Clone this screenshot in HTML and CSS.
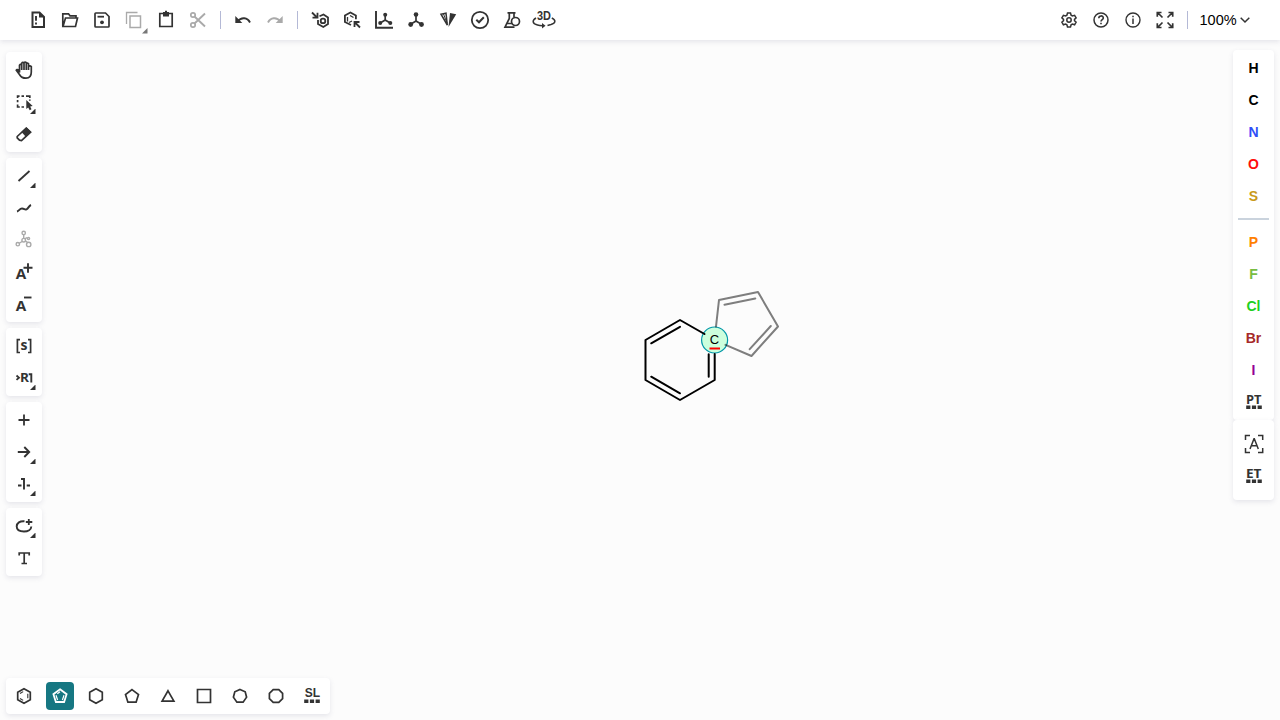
FILE: index.html
```
<!DOCTYPE html>
<html lang="en">
<head>
<meta charset="utf-8">
<title>Molecule editor</title>
<link rel="stylesheet" href="styles.css">
</head>
<body>
<div class="app">
<header class="topbar">
  <button class="btn"><svg viewBox="0 0 24 24"><path d="M6.500 4.500h7l4.500 4.500v10H6.500z" stroke-width="2"/><path d="M13 4v5.500h5.500z" class="solid"/><path d="M10 8v4.700M10 14.500v2" stroke-width="1.900"/></svg></button>
  <button class="btn"><svg viewBox="0 0 24 24"><path d="M4.800 18.500V5.800h5.700l1.500 2h6v2.200M5 18.500l2.500-8.500h12l-2 8.500z" stroke-width="1.700"/></svg></button>
  <button class="btn"><svg viewBox="0 0 24 24"><path d="M5.800 5h9.700l3.500 3.500v9.700q0 .8-.8.800H5.800q-.8 0-.8-.8V5.800q0-.8.8-.8z" stroke-width="1.700"/><path d="M7.500 8.700h6.500" stroke-width="1.800"/><circle cx="12" cy="14.300" r="1.900" class="solid"/></svg></button>
  <button class="btn dim"><svg viewBox="0 0 24 24"><path d="M4.500 16V4.500h11" stroke-width="1.300"/><path d="M8 8h10.500v11.500H8z" stroke-width="1.500"/></svg><i class="corner"></i></button>
  <button class="btn"><svg viewBox="0 0 24 24"><path d="M5.800 5.500h12.400v13H5.800z" stroke-width="1.700"/><path d="M9 4h6v4.500H9z" class="solid"/><path d="M11 3.500h2"/></svg></button>
  <button class="btn dim"><svg viewBox="0 0 24 24"><circle cx="7" cy="7" r="2.200"/><circle cx="7" cy="17" r="2.200"/><path d="M8.500 8.500L19 18.500M8.500 15.500L19 5.500" stroke-width="1.900"/></svg></button>
  <span class="rule"></span>
  <button class="btn"><svg viewBox="0 0 24 24"><path d="M6.500 13.500c4-5 10-4 12.500 1" stroke-width="1.900"/><path d="M4.300 8v7h7z" class="solid"/></svg></button>
  <button class="btn dim"><svg viewBox="0 0 24 24"><path d="M17.500 13.500c-4-5-10-4-12.500 1" stroke-width="1.900"/><path d="M19.700 8v7h-7z" class="solid"/></svg></button>
  <span class="rule"></span>
  <button class="btn"><svg viewBox="0 0 24 24"><path d="M4 4.500l5 5M9.500 4.700v5h-5" stroke-width="1.800"/><path d="M11.500 8.300l4-1.800 4.500 3v6.500l-4.700 3-5.300-3v-4" stroke-width="1.800"/><circle cx="15" cy="12.900" r="2.300" stroke-width="1.800"/></svg></button>
  <button class="btn"><svg viewBox="0 0 24 24"><path d="M11 17l-6.100-3V7.500l5.500-3 5.500 3v3.700" stroke-width="1.800"/><path d="M7.500 9v4.500M10 7.500l3.500 2M9 14.500l3-1.500" stroke-width="1.300"/><path d="M20 19.500l-5-5M14.500 19v-5h5" stroke-width="1.800"/></svg></button>
  <button class="btn"><svg viewBox="0 0 24 24"><path d="M4 3v16.800h17" stroke-width="1.900"/><path d="M13.200 7v5l-5 3M13.200 12l5 3" stroke-width="1.700"/><g class="solid"><circle cx="13.200" cy="6.800" r="2"/><circle cx="8.200" cy="15" r="2"/><circle cx="18.300" cy="15" r="2"/></g></svg></button>
  <button class="btn"><svg viewBox="0 0 24 24"><path d="M12 7v6l-5 3M12 13l5 3" stroke-width="1.700"/><g class="solid"><circle cx="12" cy="6.500" r="2.300"/><circle cx="6.700" cy="16.500" r="2.400"/><circle cx="17.500" cy="16.500" r="2.400"/></g></svg></button>
  <button class="btn"><svg viewBox="0 0 24 24"><path d="M5 6.200l5-1L11.300 17z" stroke-width="1.500"/><path d="M7.500 6l3.500 9" stroke-width="1"/><path d="M14 5l6.200 1.200L12.500 19z" class="solid"/></svg></button>
  <button class="btn"><svg viewBox="0 0 24 24"><circle cx="12" cy="12" r="8.200" stroke-width="1.800"/><path d="M8.300 11.700l2.700 2.600 4.800-5" stroke-width="2"/></svg></button>
  <button class="btn"><svg viewBox="0 0 24 24"><path d="M7.500 4.800h8M9.300 5v5.500L5 19.200h9.500M14 5v4M7.500 15.500h5" stroke-width="1.700"/><circle cx="15.500" cy="13.500" r="4"/></svg></button>
  <button class="btn"><svg viewBox="0 0 24 24"><text x="5" y="12.300" class="three" textLength="14" lengthAdjust="spacingAndGlyphs">3D</text><path d="M4 10C0 12.500 0 15.500 5.500 17q2 .6 5 .7M19.800 10c4.200 2 4.200 5.300-.8 6.600l-3.500.8" stroke-width="1.500"/><path d="M10 15l3.500 2.700-3.500 2.800z" class="solid"/></svg></button>
  <div class="right-tools">
    <button class="btn"><svg viewBox="0 0 24 24"><path d="M10.500 5h3l.6 2.200 1.300.8 2.200-.7 1.500 2.600-1.600 1.500v1.300l1.600 1.500-1.500 2.600-2.200-.7-1.300.7-.6 2.200h-3l-.6-2.200-1.300-.7-2.200.7-1.500-2.600 1.600-1.500v-1.300l-1.600-1.500 1.500-2.600 2.200.7 1.300-.8z" stroke-width="1.500"/><circle cx="12" cy="12" r="2.200" stroke-width="1.500"/></svg></button>
    <button class="btn"><svg viewBox="0 0 24 24"><circle cx="12" cy="12" r="7" stroke-width="1.500"/><path d="M9.800 10.200c0-3 4.500-3 4.500-.2 0 1.800-2.300 1.600-2.300 3.600M12 14.700v1.600" stroke-width="1.600"/></svg></button>
    <button class="btn"><svg viewBox="0 0 24 24"><circle cx="12" cy="12" r="7" stroke-width="1.400"/><path d="M12 10.500V16M12 7.700v1.600" stroke-width="1.500"/></svg></button>
    <button class="btn"><svg viewBox="0 0 24 24"><path d="M4.300 8.700V4.500h4.200M5 5l4.500 4.500M15.500 4.500h4.200v4.200M19 5l-4.500 4.500M4.300 15.300v4.200h4.200M5 19l4.500-4.500M15.500 19.500h4.200v-4.200M19 19l-4.500-4.500" stroke-width="1.700"/></svg></button>
    <span class="rule"></span>
    <button class="zoom">100%<svg viewBox="0 0 10 8"><path d="M.7 1.800L5 6l4.300-4.200"/></svg></button>
  </div>
</header>

<main class="workspace">
  <nav class="left">
    <div class="panel">
      <button class="btn"><svg viewBox="0 0 24 24"><path d="M7.500 14.500V7.200q1.100-1.500 2.200 0V12 5.200q1.100-1.500 2.300 0V12 4.700q1.100-1.300 2.300 0V12 5.700q1.100-1.200 2.200 0V12 8.700q1.400-1.500 2.800 0V14c0 4-2 6.200-5.300 6.200-4 0-5-1-6.200-3.200l-3.500-4.700c1-1.500 2.300-.6 3.200 2.200z" stroke-width="1.700"/></svg></button>
      <button class="btn"><svg viewBox="0 0 24 24"><path d="M5.600 8V6.200h2M9.500 6.200H12M14 6.200h3.800V8M5.600 10v2.300M5.600 14.500V17h2.200M9.500 17H12M17.800 9.500v1.200" stroke-width="1.700"/><path d="M14.300 10l6.400 6-2.500.5 1.300 2.700-1.800 1-1.500-2.800-1.900 1.700z" class="solid"/></svg><i class="corner"></i></button>
      <button class="btn"><svg viewBox="0 0 24 24"><path d="M5.200 14.500l9-8.300 4.300 4-9 8.300-2-.3-2.300-2.300z" stroke-width="1.700"/><path d="M9.500 10l5-4.700 5 4.700-5.500 5z" class="solid"/></svg></button>
    </div>
    <div class="panel">
      <button class="btn"><svg viewBox="0 0 24 24"><path d="M6.500 17L17.500 7" stroke-width="1.800"/></svg><i class="corner"></i></button>
      <button class="btn"><svg viewBox="0 0 24 24"><path d="M5 15.500c2-.5 2.500-3 5-3s2.500 1.500 4.500.8 2-3.300 4.500-4.300" stroke-width="1.900"/></svg></button>
      <button class="btn dim"><svg viewBox="0 0 24 24"><g stroke-width="1.400"><path d="M11.700 6.500v4M10 13.500l-3 2M13.500 13l2.200 1.500M13 10.700l2.200-1"/><circle cx="11.700" cy="5" r="1.700"/><circle cx="11.700" cy="12.200" r="1.800"/><circle cx="5.800" cy="16.200" r="1.700"/><circle cx="16.700" cy="16.400" r="2.200"/><circle cx="16.500" cy="10.500" r="1.100"/></g></svg></button>
      <button class="btn"><svg viewBox="0 0 24 24"><text x="3.800" y="19" class="charge" textLength="10.500" lengthAdjust="spacingAndGlyphs">A</text><path d="M16 3.200v9.500M11.500 7.800h9" stroke-width="1.900"/></svg></button>
      <button class="btn"><svg viewBox="0 0 24 24"><text x="3.800" y="19" class="charge" textLength="10.500" lengthAdjust="spacingAndGlyphs">A</text><path d="M12 5.500h7.500" stroke-width="1.900"/></svg></button>
    </div>
    <div class="panel">
      <button class="btn"><svg viewBox="0 0 24 24"><path d="M8 5.700H5.400v12.800H8M16 5.700h2.600v12.800H16" stroke-width="1.700"/><text x="12" y="16" class="sgroup" text-anchor="middle">s</text></svg></button>
      <button class="btn"><svg viewBox="0 0 24 24"><path d="M4.500 9.500L7 11.700l-2.500 2.200" stroke-width="1.800"/><text x="8" y="16.300" class="rgroup" textLength="9" lengthAdjust="spacingAndGlyphs">R</text><path d="M16.700 8.200h2.600v8.200" stroke-width="1.900"/></svg><i class="corner"></i></button>
    </div>
    <div class="panel">
      <button class="btn"><svg viewBox="0 0 24 24"><path d="M12 6.500v11M6.500 12h11" stroke-width="1.800"/></svg></button>
      <button class="btn"><svg viewBox="0 0 24 24"><path d="M5.800 12h11M12.300 7l4.900 5-4.900 5" stroke-width="1.900"/></svg><i class="corner"></i></button>
      <button class="btn"><svg viewBox="0 0 24 24"><path d="M6 13.500h3.500M14.700 13.500H18M9 7h3v10.500" stroke-width="1.900"/></svg><i class="corner"></i></button>
    </div>
    <div class="panel">
      <button class="btn"><svg viewBox="0 0 24 24"><path d="M12.500 7.300C8 6.800 4.700 9 4.700 12.500s3.300 5 7.300 5 7.300-2 7.300-5" stroke-width="1.900"/><path d="M16.800 5v6M13.800 8h6.500" stroke-width="1.800"/></svg><i class="corner"></i></button>
      <button class="btn"><svg viewBox="0 0 24 24"><path d="M7.200 9.500V7h10v2.500M12.200 7v10.500M9.500 17.500h5.500" stroke-width="1.700"/></svg></button>
    </div>
  </nav>

  <svg class="canvas" viewBox="0 0 1280 680">
    <circle cx="714.600" cy="300" r="13" class="hover"/>
    <g class="ring"><path d="M704.500 294L680 280 645.500 300v40L680 360l34.700-20v-26M680 286.800l-28.800 16.500M651.200 336.700L680 353.300M708.700 336.700v-22.500"/></g>
    <g class="ring preview"><path d="M716 286.500l3-26.500L758 252l20 34.500L751.500 316 725.500 304.800M724.500 264.800L755.300 258.500M770.800 286L749.700 309.200"/></g>
    <text x="714.500" y="304" text-anchor="middle" class="atom">C</text>
    <path d="M709.500 308.500h10.500" class="error"/>
  </svg>

  <aside class="atoms">
    <div class="panel periodic">
      <button class="el">H</button><button class="el">C</button><button class="el n">N</button><button class="el o">O</button><button class="el s">S</button>
      <span class="separator"></span>
      <button class="el p">P</button><button class="el f">F</button><button class="el cl">Cl</button><button class="el br">Br</button><button class="el i">I</button>
      <button class="btn"><svg viewBox="0 0 24 24"><text x="4" y="13.500" class="table" textLength="15.500" lengthAdjust="spacingAndGlyphs">PT</text><path d="M4.200 17.200h15.600" class="dots"/></svg></button>
    </div>
    <div class="panel extended">
      <button class="btn"><svg viewBox="0 0 24 24"><path d="M3.500 8V3.500H8M16 3.500h4.700V8M3.500 16v4.500H8M16 20.500h4.700V16M8 17l4-10.200h.3l4 10.200M9.500 13.700h5.300" stroke-width="1.500"/></svg></button>
      <button class="btn"><svg viewBox="0 0 24 24"><text x="4" y="13.500" class="table" textLength="15.500" lengthAdjust="spacingAndGlyphs">ET</text><path d="M4.200 17.200h15.600" class="dots"/></svg></button>
    </div>
  </aside>
</main>

<footer class="panel templates">
  <button class="btn"><svg viewBox="0 0 24 24"><path d="M12 4.700l6.300 3.500v7.500L12 19.300l-6.300-3.600V8.200z"/><path d="M8 9.500l3.200-1.900M8 14.500l3.200 1.900M15.800 9.700v4.600" stroke-width="1.100"/></svg></button>
  <button class="btn active"><svg viewBox="0 0 24 24"><path d="M12 5.300l6.600 4.900-2.500 7.800H7.900l-2.500-7.800z" stroke-width="1.800"/><path d="M9.600 16L8 11.200M14.400 16l1.600-4.800M9.300 9.700L12 7.800" stroke-width="1.200"/></svg></button>
  <button class="btn"><svg viewBox="0 0 24 24"><path d="M12 4.700l6.300 3.500v7.500L12 19.300l-6.300-3.600V8.200z"/></svg></button>
  <button class="btn"><svg viewBox="0 0 24 24"><path d="M12 5.600l6.500 4.900-2.400 7.700H7.900l-2.400-7.700z"/></svg></button>
  <button class="btn"><svg viewBox="0 0 24 24"><path d="M12 6.800l5.900 10.400H6.100z"/></svg></button>
  <button class="btn"><svg viewBox="0 0 24 24"><path d="M5.500 5.500h13v13h-13z"/></svg></button>
  <button class="btn"><svg viewBox="0 0 24 24"><path d="M12 5.500l5.200 2.300 1.400 5.400-3.500 5H8.900l-3.500-5 1.400-5.400z"/></svg></button>
  <button class="btn"><svg viewBox="0 0 24 24"><path d="M9.200 5.700h5.600l3.800 3.700v5.200l-3.800 3.700H9.200l-3.800-3.700V9.400z"/></svg></button>
  <button class="btn"><svg viewBox="0 0 24 24"><text x="12.300" y="13" text-anchor="middle" class="table sans">SL</text><path d="M4.200 17.200h15.600" class="dots"/></svg></button>
</footer>
</div>
</body>
</html>
```
FILE: styles.css
```
* { box-sizing: border-box; }
body { margin: 0; overflow: hidden; font-family: Inter, "Liberation Sans", sans-serif; }
button { border: 0; padding: 0; background: none; font: inherit; color: inherit; }
.app { position: relative; width: 1280px; height: 720px; background: #fcfcfc; display: flex; flex-direction: column; }
.topbar { position: relative; height: 40px; flex: none; padding-left: 22px; display: flex; align-items: center; background: #fff; box-shadow: 0 2px 5px rgba(103, 104, 132, .15); }
.btn { position: relative; flex: none; width: 32px; height: 32px; display: flex; align-items: center; justify-content: center; color: #333; }
.btn svg { width: 24px; height: 24px; overflow: visible; fill: none; stroke: currentColor; stroke-width: 1.7; }
.btn svg text { fill: currentColor; stroke: none; }
.btn svg .solid { fill: currentColor; stroke: none; }
.dim { color: #aaa; }
.corner { position: absolute; right: 4.5px; bottom: 4px; width: 5.5px; height: 5.5px; background: #333; clip-path: polygon(100% 0, 100% 100%, 0 100%); }
.dim .corner { right: 2.5px; bottom: 2.5px; background: #777; }
.rule { width: 1px; height: 18px; margin: 0 6px; background: #b4b9d6; }
.right-tools { margin-left: auto; width: 227px; display: flex; align-items: center; }
.zoom { display: flex; align-items: center; margin-left: 5.5px; font: 14.5px "Liberation Sans", sans-serif; color: #000; gap: 3px; }
.zoom svg { width: 10px; height: 8px; fill: none; stroke: #333; stroke-width: 1.5; }
.three { font: 700 12px "Liberation Sans", sans-serif; }
.charge { font: 700 14px "Open Sans", sans-serif; }
.sgroup { font: 700 14px "Open Sans", sans-serif; }
.rgroup { font: 700 12.5px "Open Sans", sans-serif; }
.table { font: 700 11.5px "Open Sans", sans-serif; }
.sans { font: 700 12px "Liberation Sans", sans-serif; }
.btn svg .dots { stroke-width: 3.5; stroke-dasharray: 4.2 1.5; }
.workspace { position: relative; flex: 1; display: flex; justify-content: space-between; padding: 10px 6px 0; }
.panel { background: #fff; border-radius: 4px; box-shadow: 0 2px 5px rgba(103, 104, 132, .15); }
.left { width: 36px; display: flex; flex-direction: column; gap: 6px; padding-top: 2px; }
.left .panel { padding: 2px; }
.canvas { position: absolute; left: 0; top: 0; width: 1280px; height: 680px; pointer-events: none; }
.ring { fill: none; stroke: #000; stroke-width: 2; stroke-linecap: round; stroke-linejoin: round; }
.preview { opacity: .5; }
.hover { fill: #ccffdd; stroke: #0097a8; stroke-width: 1.2; }
.atom { font: 13px "Liberation Sans", sans-serif; fill: #000; }
.error { fill: none; stroke: #f00; stroke-width: 2; }
.atoms { width: 41px; display: flex; flex-direction: column; }
.periodic { display: flex; flex-direction: column; align-items: center; padding: 2px 0; }
.extended { height: 80px; padding: 8px 0; display: flex; flex-direction: column; align-items: center; }
.el { width: 32px; height: 32px; font: 700 14px "Liberation Sans", sans-serif; color: #000; }
.separator { width: 31px; height: 2px; margin: 6px 0; background: #cad3dd; }
.n { color: #304ff7; }
.o { color: #ff0d0d; }
.s { color: #c99a19; }
.p { color: #ff8000; }
.f { color: #78bc42; }
.cl { color: #1fd01f; }
.br { color: #a62929; }
.i { color: #940094; }
.templates { width: 324px; height: 36px; margin: 0 0 6px 6px; flex: none; display: flex; align-items: center; gap: 8px; padding: 0 4px; }
.templates .btn { width: 28px; height: 28px; border-radius: 4px; }
.active { background: #167782; color: #fff; }
```
